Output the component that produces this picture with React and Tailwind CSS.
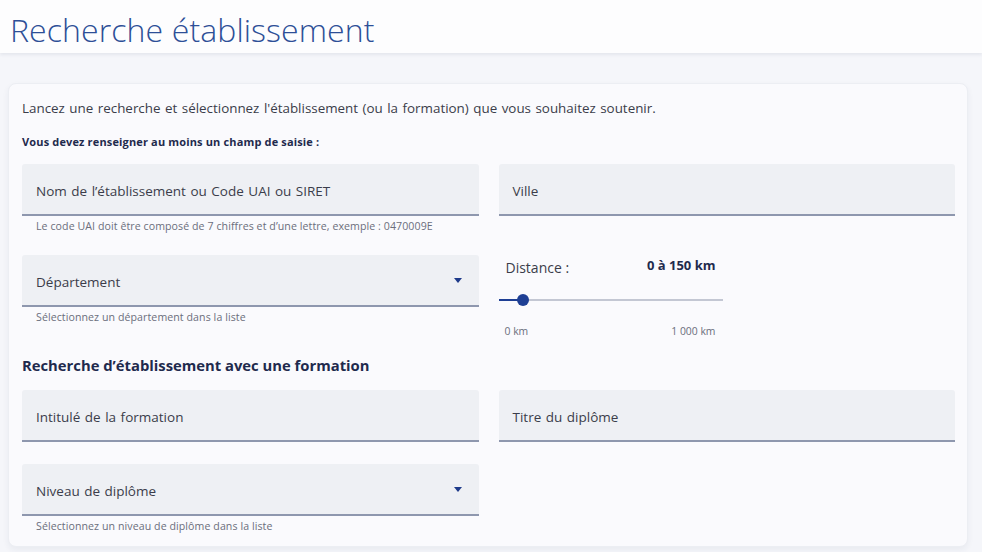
import React from 'react';

const font = { fontFamily: '"Open Sans", "Liberation Sans", sans-serif' };

const Field = ({ label, select, help }) => (
  <div className="flex flex-col">
    <div className="h-[52px] bg-[#eef0f4] border-b-2 border-[#8e97ae] rounded-t-[3px] flex items-center justify-between pt-[5px] pl-[14px] pr-[17px]">
      <span className="text-[13.5px] [word-spacing:1px] text-[#3b3d4a]">{label}</span>
      {select && (
        <svg width="8" height="5" viewBox="0 0 8 5" className="-mt-[4px]">
          <path d="M0 0h8L4 5z" fill="#1e3a8a" />
        </svg>
      )}
    </div>
    {help && <p className="mt-[4px] pl-[14px] text-[10.6px] leading-[12px] tracking-[0.08px] text-[#6b6e7c]">{help}</p>}
  </div>
);

const Distance = () => (
  <div className="w-[224px] pt-[2px]">
    <div className="flex justify-between items-start pl-[7px] pr-[7px]">
      <span className="mt-[2px] text-[14px] leading-[18px] text-[#3b3d4a]">Distance :</span>
      <span className="text-[13px] leading-[16px] font-bold text-[#1f2a4d]">0 à 150 km</span>
    </div>
    <div className="relative h-[14px] mt-[16px]">
      <div className="absolute left-0 right-0 top-[6px] h-[2px] bg-[#c3c7d3]" />
      <div className="absolute left-0 w-[24px] top-[6px] h-[2px] bg-[#1e3f94]" />
      <div className="absolute left-[18px] top-[1px] w-[12px] h-[12px] rounded-full bg-[#1e3f94]" />
    </div>
    <div className="flex justify-between mt-[18px] pl-[6px] pr-[7px] text-[10.4px] leading-[12px] text-[#6b6e7c]">
      <span>0 km</span>
      <span>1 000 km</span>
    </div>
  </div>
);

export default function App() {
  return (
    <div className="w-[982px] h-[552px] overflow-hidden bg-[#f5f6fa]" style={font}>
      <header className="h-[53px] bg-[#fdfdfe] shadow-[0_2px_3px_rgba(40,50,90,0.08)] flex items-center pl-[10px] relative">
        <h1 className="text-[32px] font-light text-[#2d4f97] tracking-[0.1px] mt-[6px]">Recherche établissement</h1>
      </header>
      <div className="pt-[30px] pl-[8px] pr-[14px]">
        <div className="bg-[#fafafd] rounded-[8px] border border-[#eceef3] shadow-[0_3px_6px_rgba(40,50,90,0.06)] pt-[15px] pl-[13px] pr-[12px] pb-[14px]">
          <p className="text-[13.4px] leading-[18px] [word-spacing:1px] text-[#3b3d4a]">
            Lancez une recherche et sélectionnez l'établissement (ou la formation) que vous souhaitez soutenir.
          </p>
          <p className="mt-[17px] text-[11px] leading-[16px] tracking-[0.15px] font-bold text-[#1f2a4d]">
            Vous devez renseigner au moins un champ de saisie :
          </p>
          <div className="mt-[14px] grid grid-cols-2 gap-x-[20px] items-start">
            <Field label="Nom de l’établissement ou Code UAI ou SIRET" help="Le code UAI doit être composé de 7 chiffres et d’une lettre, exemple : 0470009E" />
            <Field label="Ville" />
          </div>
          <div className="mt-[23px] grid grid-cols-2 gap-x-[20px] items-start">
            <Field label="Département" select help="Sélectionnez un département dans la liste" />
            <Distance />
          </div>
          <h2 className="mt-[18px] text-[14.8px] leading-[20px] font-bold text-[#1f2a4d]">
            Recherche d’établissement avec une formation
          </h2>
          <div className="mt-[15px] grid grid-cols-2 gap-x-[20px] items-start">
            <Field label="Intitulé de la formation" />
            <Field label="Titre du diplôme" />
          </div>
          <div className="mt-[22px] grid grid-cols-2 gap-x-[20px] items-start">
            <Field label="Niveau de diplôme" select help="Sélectionnez un niveau de diplôme dans la liste" />
          </div>
        </div>
      </div>
    </div>
  );
}
